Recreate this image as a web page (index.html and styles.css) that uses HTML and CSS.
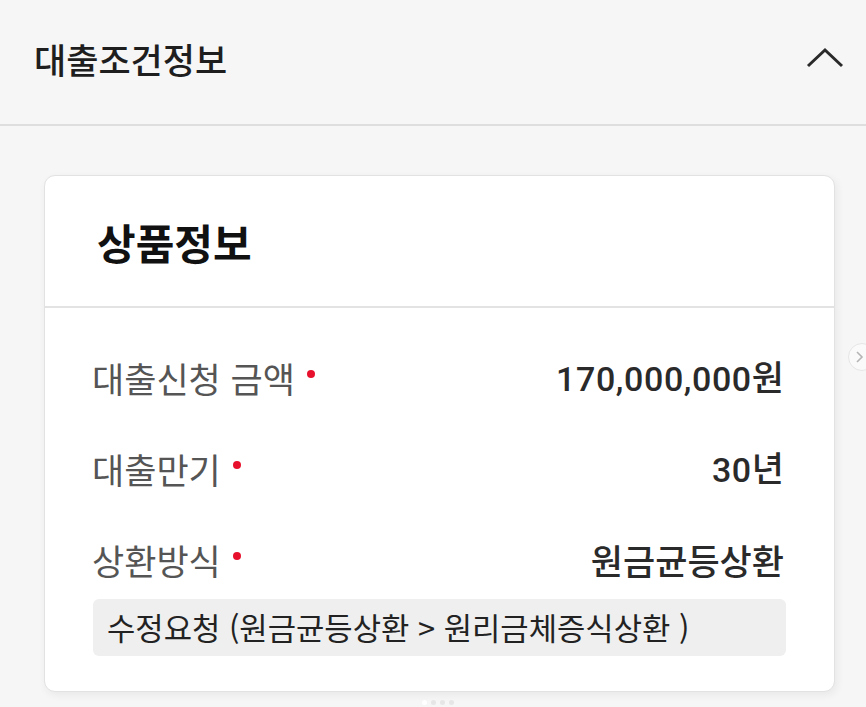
FILE: index.html
```html
<!DOCTYPE html>
<html lang="ko">
<head>
<meta charset="utf-8">
<title>대출조건정보</title>
<link rel="stylesheet" href="styles.css">
</head>
<body>
<div class="page">
  <header class="section-head">
    <h1 class="section-title">대출조건정보</h1>
    <svg class="chevron" width="40" height="24" viewBox="0 0 40 24" aria-hidden="true">
      <path d="M2 20 L19 4 L36 20" fill="none" stroke="#2a2a2a" stroke-width="3"/>
    </svg>
  </header>

  <main class="carousel">
    <section class="card">
      <div class="card-head">
        <h2 class="card-title">상품정보</h2>
      </div>
      <div class="card-body">
        <div class="row">
          <span class="label">대출신청 금액<i class="req"></i></span>
          <span class="value"><span class="num">170,000,000</span>원</span>
        </div>
        <div class="row">
          <span class="label">대출만기<i class="req"></i></span>
          <span class="value"><span class="num">30</span>년</span>
        </div>
        <div class="row">
          <span class="label">상환방식<i class="req"></i></span>
          <span class="value">원금균등상환</span>
        </div>
        <div class="note">수정요청 (원금균등상환 &gt; 원리금체증식상환 )</div>
      </div>
    </section>
    <div class="dots">
      <span class="dot active"></span><span class="dot"></span><span class="dot"></span><span class="dot"></span>
    </div>
    <button class="next-btn" aria-label="다음">
      <svg width="10" height="14" viewBox="0 0 10 14"><path d="M2 2 L7 7 L2 12" fill="none" stroke="#b5b5b5" stroke-width="1.6"/></svg>
    </button>
  </main>
</div>
</body>
</html>
```

FILE: styles.css
```css
* { box-sizing: border-box; }
html, body {
  margin: 0;
  padding: 0;
  background: #f6f6f6;
  font-family: "Noto Sans CJK KR", "Noto Sans", Roboto, sans-serif;
  color: #222;
}
.page {
  width: 866px;
  height: 707px;
  overflow: hidden;
  position: relative;
}
.section-head {
  height: 126px;
  display: flex;
  align-items: center;
  justify-content: space-between;
  padding: 0 20px 8px 34px;
  border-bottom: 2px solid #dedede;
}
.section-title {
  margin: 0;
  font-size: 35px;
  font-weight: 500;
  color: #1e1e1e;
  line-height: 1;
}
.chevron { display: block; }

.carousel {
  position: relative;
  padding: 49px 31px 0 44px;
}
.card {
  width: 791px;
  background: #fff;
  border: 1px solid #e2e2e2;
  border-radius: 11px;
  box-shadow: 2px 3px 8px rgba(0,0,0,0.06);
}
.card-head {
  height: 132px;
  display: flex;
  align-items: center;
  padding-left: 52px;
  border-bottom: 2px solid #e3e3e3;
}
.card-title {
  margin: 0;
  font-size: 42px;
  font-weight: 700;
  color: #111;
  line-height: 1;
  padding-top: 2px;
}
.card-body {
  padding: 47px 50px 35px 47px;
  display: flex;
  flex-direction: column;
}
.row {
  height: 44px;
  display: flex;
  align-items: center;
  justify-content: space-between;
  margin-bottom: 47px;
}
.row:nth-child(3) { margin-bottom: 18px; }
.label {
  display: flex;
  align-items: center;
  font-size: 35px;
  font-weight: 400;
  color: #555;
  line-height: 1;
}
.req {
  width: 8px;
  height: 8px;
  border-radius: 50%;
  background: #e8112d;
  margin-left: 12px;
  margin-top: -6px;
}
.value {
  font-size: 35px;
  font-weight: 500;
  color: #2a2a2a;
  line-height: 1;
}
.num {
  font-family: Roboto, "Noto Sans CJK KR", sans-serif;
  font-size: 34px;
  letter-spacing: 0.6px;
}
.note {
  height: 57px;
  display: flex;
  align-items: center;
  background: #efefef;
  border-radius: 6px;
  padding-left: 14px;
  margin-left: 1px;
  margin-right: -2px;
  font-size: 30.8px;
  color: #222;
  line-height: 1;
}
.dots {
  display: flex;
  justify-content: center;
  gap: 4px;
  margin-top: 8px;
  padding-right: 4px;
}
.dot {
  width: 5px;
  height: 5px;
  border-radius: 50%;
  background: #e6e6e6;
}
.dot.active { background: #fff; }
.next-btn {
  position: absolute;
  left: 848px;
  top: 217px;
  width: 28px;
  height: 28px;
  border-radius: 50%;
  background: #fafafa;
  border: 1px solid #e6e6e6;
  padding: 0 0 0 6px;
  display: flex;
  align-items: center;
}
```
